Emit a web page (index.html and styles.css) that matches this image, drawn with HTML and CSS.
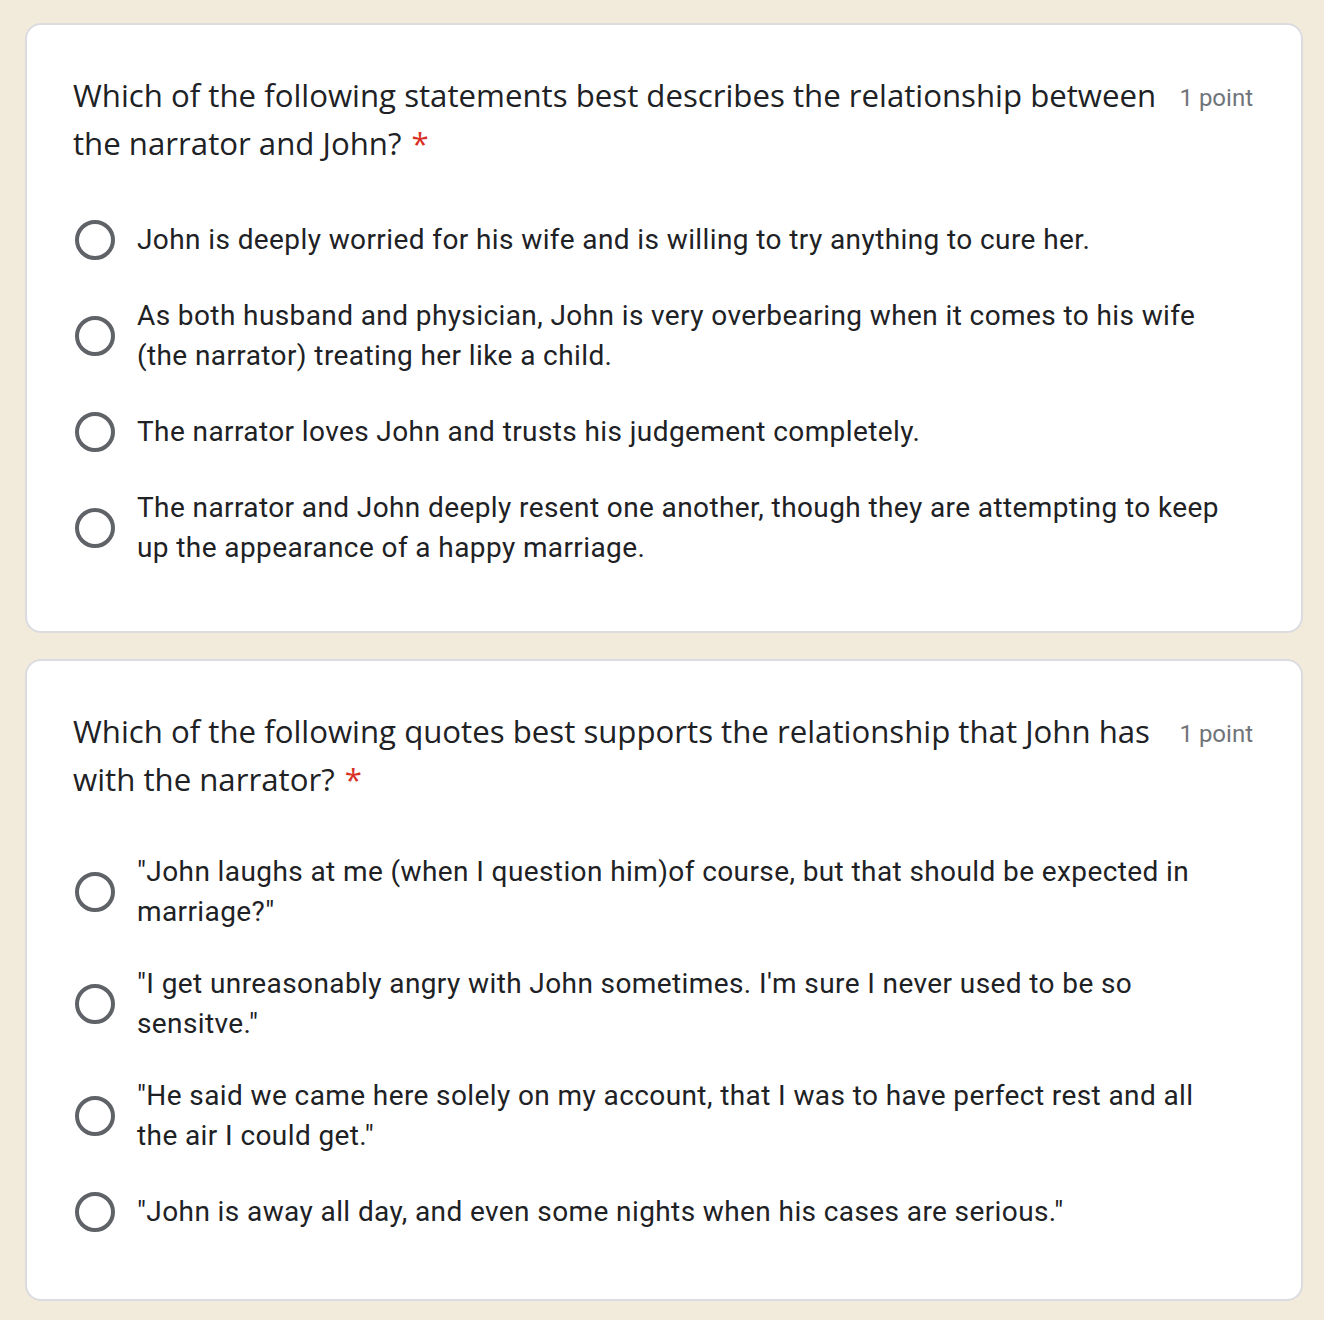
FILE: index.html
```html
<!DOCTYPE html>
<html lang="en">
<head>
<meta charset="utf-8">
<title>Quiz</title>
<link rel="stylesheet" href="styles.css">
</head>
<body>
<main class="form">
  <section class="card">
    <div class="q-head">
      <div class="q-title">Which of the following statements best describes the relationship between the narrator and John? <span class="req">*</span></div>
      <div class="q-points">1 point</div>
    </div>
    <div class="options">
      <label class="opt"><span class="radio"></span><span class="opt-text">John is deeply worried for his wife and is willing to try anything to cure her.</span></label>
      <label class="opt"><span class="radio"></span><span class="opt-text">As both husband and physician, John is very overbearing when it comes to his wife (the narrator) treating her like a child.</span></label>
      <label class="opt"><span class="radio"></span><span class="opt-text">The narrator loves John and trusts his judgement completely.</span></label>
      <label class="opt"><span class="radio"></span><span class="opt-text">The narrator and John deeply resent one another, though they are attempting to keep up the appearance of a happy marriage.</span></label>
    </div>
  </section>
  <section class="card">
    <div class="q-head">
      <div class="q-title">Which of the following quotes best supports the relationship that John has with the narrator? <span class="req">*</span></div>
      <div class="q-points">1 point</div>
    </div>
    <div class="options">
      <label class="opt"><span class="radio"></span><span class="opt-text">"John laughs at me (when I question him)of course, but that should be expected in marriage?"</span></label>
      <label class="opt"><span class="radio"></span><span class="opt-text">"I get unreasonably angry with John sometimes. I'm sure I never used to be so sensitve."</span></label>
      <label class="opt"><span class="radio"></span><span class="opt-text">"He said we came here solely on my account, that I was to have perfect rest and all the air I could get."</span></label>
      <label class="opt"><span class="radio"></span><span class="opt-text">"John is away all day, and even some nights when his cases are serious."</span></label>
    </div>
  </section>
</main>
</body>
</html>
```

FILE: styles.css
```css
html, body {
  margin: 0;
  padding: 0;
  background: #f2ebdb;
}
body {
  font-family: Roboto, "Liberation Sans", sans-serif;
  color: #202124;
}
.form {
  display: flex;
  flex-direction: column;
  gap: 26px;
  padding: 23px 21px 0 25px;
}
.card {
  background: #fff;
  border: 2px solid #dadce0;
  border-radius: 16px;
  padding: 46px 48px 63px 46px;
}
.q-head {
  display: flex;
  align-items: flex-start;
  gap: 14px;
}
.q-title {
  flex: 1;
  font-family: "Open Sans", Roboto, sans-serif;
  font-size: 31.2px;
  line-height: 48px;
  color: #202124;
}
.req {
  color: #d93025;
  margin-left: 2px;
}
.q-points {
  font-family: Roboto, sans-serif;
  font-size: 24px;
  line-height: 48px;
  color: #70757a;
  white-space: nowrap;
  padding-top: 3px;
}
.options {
  display: flex;
  flex-direction: column;
  gap: 32px;
  margin-top: 49px;
}
.opt {
  display: flex;
  align-items: center;
  min-height: 48px;
  padding-right: 24px;
  cursor: pointer;
}
.radio {
  flex: none;
  width: 32px;
  height: 32px;
  border: 4px solid #5f6368;
  border-radius: 50%;
  margin: 0 22px 0 2px;
}
.opt-text {
  font-size: 28px;
  line-height: 40px;
  color: #202124;
  letter-spacing: 0.4px;
}
```
